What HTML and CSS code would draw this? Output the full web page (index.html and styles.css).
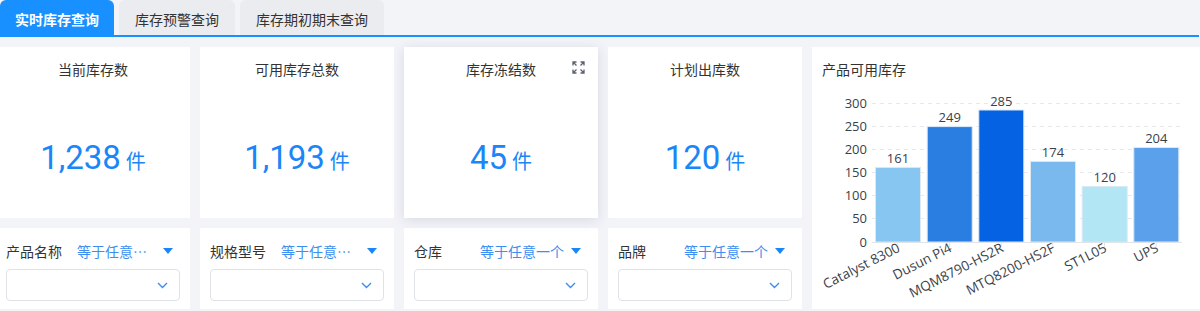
FILE: index.html
```html
<!DOCTYPE html>
<html lang="zh-CN">
<head>
<meta charset="utf-8">
<title>库存查询</title>
<link rel="stylesheet" href="styles.css">
</head>
<body>
<div class="tabs">
  <div class="tab active">实时库存查询</div>
  <div class="tab">库存预警查询</div>
  <div class="tab">库存期初期末查询</div>
</div>
<div class="grid">
  <div class="card stat">
    <div class="stat-title">当前库存数</div>
    <div class="stat-value"><span class="num">1,238</span><span class="unit">件</span></div>
  </div>
  <div class="card stat">
    <div class="stat-title">可用库存总数</div>
    <div class="stat-value"><span class="num">1,193</span><span class="unit">件</span></div>
  </div>
  <div class="card stat hovered">
    <div class="stat-title">库存冻结数</div>
    <svg class="expand" width="13" height="13" viewBox="0 0 13 13" fill="none" stroke="#5a6270" stroke-width="1.3">
      <path d="M1 4.5V1h3.5M1 1l3.5 3.5"/>
      <path d="M12 4.5V1H8.5M12 1L8.5 4.5"/>
      <path d="M1 8.5V12h3.5M1 12l3.5-3.5"/>
      <path d="M12 8.5V12H8.5M12 12L8.5 8.5"/>
    </svg>
    <div class="stat-value"><span class="num">45</span><span class="unit">件</span></div>
  </div>
  <div class="card stat">
    <div class="stat-title">计划出库数</div>
    <div class="stat-value"><span class="num">120</span><span class="unit">件</span></div>
  </div>
  <div class="card chart">
    <div class="chart-title">产品可用库存</div>
    <svg class="chart-svg" width="388" height="229" viewBox="0 0 388 229">
      <g class="grid-lines" stroke="#e6e8ee" stroke-dasharray="4 4" stroke-width="1">
        <line x1="60" x2="370" y1="24.5" y2="24.5"/>
        <line x1="60" x2="370" y1="47.5" y2="47.5"/>
        <line x1="60" x2="370" y1="70.5" y2="70.5"/>
        <line x1="60" x2="370" y1="93.5" y2="93.5"/>
        <line x1="60" x2="370" y1="116.5" y2="116.5"/>
        <line x1="60" x2="370" y1="139.5" y2="139.5"/>
      </g>
      <g class="ylabels" text-anchor="end" font-size="13" fill="#3a3f4a">
        <text x="55" y="29">300</text>
        <text x="55" y="52">250</text>
        <text x="55" y="75">200</text>
        <text x="55" y="98">150</text>
        <text x="55" y="121">100</text>
        <text x="55" y="144">50</text>
        <text x="55" y="167.5">0</text>
      </g>
      <g class="bars" stroke="#dbe9f7" stroke-width="1">
        <rect x="63.5" y="88.4" width="45" height="74.6" fill="#88c6f2"/>
        <rect x="115.2" y="47.6" width="45" height="115.4" fill="#2a7de1"/>
        <rect x="166.8" y="31" width="45" height="132" fill="#0563e3"/>
        <rect x="218.5" y="82.4" width="45" height="80.6" fill="#7ab9ee"/>
        <rect x="270.2" y="107.4" width="45" height="55.6" fill="#b3e6f5"/>
        <rect x="321.8" y="68.5" width="45" height="94.5" fill="#5aa0ea"/>
      </g>
      <line x1="60" x2="370" y1="163.5" y2="163.5" stroke="#dfe3ea" stroke-width="1"/>
      <g stroke="#dfe3ea" stroke-width="1">
        <line x1="85.8" x2="85.8" y1="163" y2="168"/>
        <line x1="137.5" x2="137.5" y1="163" y2="168"/>
        <line x1="189.2" x2="189.2" y1="163" y2="168"/>
        <line x1="240.8" x2="240.8" y1="163" y2="168"/>
        <line x1="292.5" x2="292.5" y1="163" y2="168"/>
        <line x1="344.2" x2="344.2" y1="163" y2="168"/>
      </g>
      <g class="values" text-anchor="middle" font-size="13" fill="#3a3f4a">
        <text x="86" y="84">161</text>
        <text x="137.7" y="43">249</text>
        <text x="189.3" y="26.5">285</text>
        <text x="241" y="78">174</text>
        <text x="292.7" y="103">120</text>
        <text x="344.3" y="64">204</text>
      </g>
      <g class="xlabels" text-anchor="end" font-size="13.5" fill="#3a3f4a">
        <text transform="translate(89 172) rotate(-27)">Catalyst 8300</text>
        <text transform="translate(140.7 172) rotate(-27)">Dusun Pi4</text>
        <text transform="translate(192.4 172) rotate(-27)">MQM8790-HS2R</text>
        <text transform="translate(244 172) rotate(-27)">MTQ8200-HS2F</text>
        <text transform="translate(295.7 172) rotate(-27)">ST1L05</text>
        <text transform="translate(347.4 172) rotate(-27)">UPS</text>
      </g>
    </svg>
  </div>
  <div class="card filter">
    <div class="f-head"><span class="f-label">产品名称</span><span class="f-op"><span class="f-op-text">等于任意一个</span><span class="caret"></span></span></div>
    <div class="select"><svg width="11" height="7" viewBox="0 0 11 7" fill="none" stroke="#3c8ff0" stroke-width="1.4"><path d="M1 1l4.5 4.5L10 1"/></svg></div>
  </div>
  <div class="card filter">
    <div class="f-head"><span class="f-label">规格型号</span><span class="f-op"><span class="f-op-text">等于任意一个</span><span class="caret"></span></span></div>
    <div class="select"><svg width="11" height="7" viewBox="0 0 11 7" fill="none" stroke="#3c8ff0" stroke-width="1.4"><path d="M1 1l4.5 4.5L10 1"/></svg></div>
  </div>
  <div class="card filter">
    <div class="f-head"><span class="f-label">仓库</span><span class="f-op"><span class="f-op-text">等于任意一个</span><span class="caret"></span></span></div>
    <div class="select"><svg width="11" height="7" viewBox="0 0 11 7" fill="none" stroke="#3c8ff0" stroke-width="1.4"><path d="M1 1l4.5 4.5L10 1"/></svg></div>
  </div>
  <div class="card filter">
    <div class="f-head"><span class="f-label">品牌</span><span class="f-op"><span class="f-op-text">等于任意一个</span><span class="caret"></span></span></div>
    <div class="select"><svg width="11" height="7" viewBox="0 0 11 7" fill="none" stroke="#3c8ff0" stroke-width="1.4"><path d="M1 1l4.5 4.5L10 1"/></svg></div>
  </div>
</div>
</body>
</html>
```

FILE: styles.css
```css
html, body {
  margin: 0;
  padding: 0;
}
body {
  background: #f3f4f8;
  font-family: "Noto Sans CJK SC", "Noto Sans", sans-serif;
  font-size: 14px;
  color: #333;
  overflow: hidden;
  width: 1200px;
  height: 311px;
}
.tabs {
  display: flex;
  gap: 5px;
  border-bottom: 2px solid #1890ff;
  width: 1199px;
}
.tab {
  height: 35px;
  box-sizing: border-box;
  padding: 4px 16px 0;
  line-height: 31px;
  background: #ebecf0;
  border-radius: 6px 6px 0 0;
  color: #333;
  font-size: 14px;
}
.tab.active {
  background: #1890ff;
  color: #fff;
  font-weight: bold;
  padding: 4px 15px 0;
}
.grid {
  display: grid;
  grid-template-columns: repeat(4, 194px) 388px;
  grid-template-rows: 171px 81px;
  gap: 10px;
  margin: 10px 0 0 -4px;
}
.card {
  background: #fff;
}
.stat {
  display: flex;
  flex-direction: column;
  align-items: center;
  position: relative;
}
.hovered {
  box-shadow: 0 2px 12px rgba(40, 50, 90, 0.13);
}
.stat-title {
  padding-top: 12px;
  line-height: 20px;
  font-size: 14px;
  color: #333;
}
.expand {
  position: absolute;
  top: 14px;
  right: 13px;
}
.stat-value {
  flex: 1;
  display: flex;
  align-items: baseline;
  justify-content: center;
  color: #1a86f7;
  padding-top: 18px;
  box-sizing: border-box;
  align-content: center;
  flex-wrap: wrap;
}
.num {
  font-family: Roboto, "Noto Sans", sans-serif;
  font-size: 33px;
  line-height: 40px;
}
.unit {
  font-size: 20px;
  margin-left: 5px;
  font-family: "Noto Sans CJK SC", sans-serif;
}
.chart {
  grid-column: 5;
  grid-row: 1 / span 2;
  display: flex;
  flex-direction: column;
}
.chart-title {
  padding: 12px 10px 0;
  line-height: 20px;
  font-size: 14px;
  color: #333;
}
.chart-svg {
  display: block;
  flex-shrink: 0;
  overflow: visible;
  font-family: "Open Sans", "Noto Sans", sans-serif;
}
.filter {
  padding: 13px 10px 8px;
  display: flex;
  flex-direction: column;
}
.f-head {
  display: flex;
  align-items: center;
  height: 20px;
  margin-bottom: 8px;
  font-size: 14px;
  line-height: 20px;
}
.f-label {
  flex-shrink: 0;
  margin-right: 15px;
  color: #333;
}
.f-op {
  flex: 1;
  min-width: 0;
  display: flex;
  align-items: center;
  justify-content: flex-end;
  color: #3c8ff0;
}
.f-op-text {
  min-width: 0;
  overflow: hidden;
  white-space: nowrap;
  text-overflow: ellipsis;
}
.caret {
  flex-shrink: 0;
  width: 0;
  height: 0;
  border-left: 5px solid transparent;
  border-right: 5px solid transparent;
  border-top: 6px solid #1a86f7;
  margin: 0 7px;
}
.select {
  height: 32px;
  box-sizing: border-box;
  border: 1px solid #dfe2e8;
  border-radius: 4px;
  display: flex;
  align-items: center;
  justify-content: flex-end;
  padding-right: 11px;
}
```
